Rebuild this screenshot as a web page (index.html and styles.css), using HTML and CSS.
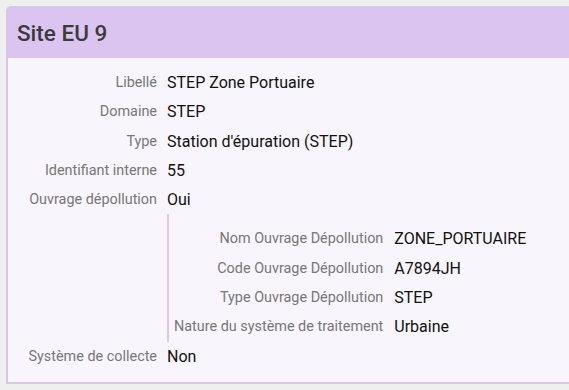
FILE: index.html
```html
<!DOCTYPE html>
<html lang="fr">
<head>
    <meta charset="UTF-8">
    <meta name="viewport" content="width=device-width, initial-scale=1.0">
    <title>Site EU 9</title>
    <link rel="stylesheet" href="styles.css">
</head>
<body>

    <div class="card">
        <div class="card-header">
            <h2>Site EU 9</h2>
        </div>

        <div class="card-body">
            <div class="fields">
                <div class="label">Libellé</div>
                <div class="value">STEP Zone Portuaire</div>

                <div class="label">Domaine</div>
                <div class="value">STEP</div>

                <div class="label">Type</div>
                <div class="value">Station d'épuration (STEP)</div>

                <div class="label">Identifiant interne</div>
                <div class="value">55</div>

                <div class="label">Ouvrage dépollution</div>
                <div class="value">Oui</div>

                <!-- Ouvrage details -->
                <div class="nested">
                    <div class="label">Nom Ouvrage Dépollution</div>
                    <div class="value">ZONE_PORTUAIRE</div>

                    <div class="label">Code Ouvrage Dépollution</div>
                    <div class="value">A7894JH</div>

                    <div class="label">Type Ouvrage Dépollution</div>
                    <div class="value">STEP</div>

                    <div class="label">Nature du système de traitement</div>
                    <div class="value">Urbaine</div>
                </div>

                <div class="label">Système de collecte</div>
                <div class="value">Non</div>
            </div>
        </div>
    </div>

</body>
</html>
```

FILE: styles.css
```css
html, body {
    overflow: hidden;
}
body {
    font-family: Roboto, "Liberation Sans", sans-serif;
    margin: 0;
    padding: 6px 0 0 6px;
    background-color: #efefef;
}
.card {
    width: 620px;
}
.card-header {
    background-color: #dbc5f0;
    border-radius: 5px 5px 0 0;
    height: 52px;
    padding: 0 11px;
}
.card-header h2 {
    margin: 0;
    font-size: 22.5px;
    font-weight: 500;
    line-height: 54px;
    color: #3b3b3b;
}
.card-body {
    background-color: #f9f5fd;
    border-left: 2px solid #dbc5f0;
    border-bottom: 2px solid #dbc5f0;
    padding: 10px 0 11px 0;
}
.fields {
    display: grid;
    grid-template-columns: 149px 1fr;
    column-gap: 10px;
}
.label, .value {
    line-height: 29.3px;
}
.label {
    text-align: right;
    color: #777;
    font-size: 14.4px;
}
.value {
    color: #111;
    font-size: 16px;
}
.nested {
    grid-column: 2;
    display: grid;
    grid-template-columns: max-content 1fr;
    column-gap: 11px;
    border-left: 2px solid #dcc6f0;
    padding: 10px 0 0 5px;
}
```
